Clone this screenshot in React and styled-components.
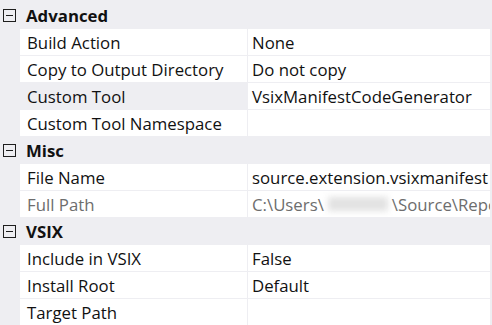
import React from 'react'
import styled, { createGlobalStyle } from 'styled-components'

const GlobalStyle = createGlobalStyle`
	html, body {
		margin: 0;
		padding: 0;
		background: #eeeef2;
	}
`

const Grid = styled.div`
	width: 492px;
	height: 325px;
	overflow: hidden;
	background: #eeeef2;
	font-family: "Open Sans", "Noto Sans", sans-serif;
	font-size: 16.8px;
	color: #111111;
	display: flex;
	flex-direction: column;
`

const Category = styled.div`
	display: flex;
	flex-direction: column;
`

const Header = styled.div`
	height: ${p => p.h}px;
	display: flex;
	align-items: center;
	gap: 10px;
	padding-left: 3px;
	padding-top: 1px;
	box-sizing: border-box;
	font-weight: bold;
`

const Toggle = styled.span`
	width: 11px;
	height: 11px;
	border: 1px solid #1e1e1e;
	position: relative;
	flex: none;

	&::after {
		content: '';
		position: absolute;
		left: 2px;
		right: 2px;
		top: 5px;
		height: 1px;
		background: #1e1e1e;
	}
`

const Row = styled.div`
	display: grid;
	grid-template-columns: 227px 1px 242px;
	margin-left: 20px;
	height: 26px;
	border-bottom: 1px solid #eeeef2;
	&:last-child {
		border-bottom: none;
	}
`

const Name = styled.div`
	background: ${p => (p.selected ? '#eeeef2' : '#ffffff')};
	color: ${p => (p.readOnly ? '#6d6d6d' : '#111111')};
	padding-left: 7px;
	display: flex;
	align-items: center;
	white-space: nowrap;
	overflow: hidden;
`

const Divider = styled.div`
	background: #eeeef2;
`

const Value = styled(Name)`
	background: #ffffff;
	padding-left: 4px;
`

const Blur = styled.span`
	display: inline-block;
	flex: none;
	width: 60px;
	height: 14px;
	margin: 0 4px;
	background: #e2e2e2;
	filter: blur(3px);
`

const categories = [
	{
		title: 'Advanced',
		h: 29,
		rows: [
			{ name: 'Build Action', value: 'None' },
			{ name: 'Copy to Output Directory', value: 'Do not copy' },
			{ name: 'Custom Tool', value: 'VsixManifestCodeGenerator', selected: true },
			{ name: 'Custom Tool Namespace', value: '' },
		],
	},
	{
		title: 'Misc',
		h: 28,
		rows: [
			{ name: 'File Name', value: 'source.extension.vsixmanifest' },
			{
				name: 'Full Path',
				value: (
					<>
						C:\Users\<Blur />\Source\Repos\
					</>
				),
				readOnly: true,
			},
		],
	},
	{
		title: 'VSIX',
		h: 28,
		rows: [
			{ name: 'Include in VSIX', value: 'False' },
			{ name: 'Install Root', value: 'Default' },
			{ name: 'Target Path', value: '' },
		],
	},
]

export default function App() {
	return (
		<>
			<GlobalStyle />
			<Grid>
				{categories.map(cat => (
					<Category key={cat.title}>
						<Header h={cat.h}>
							<Toggle />
							{cat.title}
						</Header>
						{cat.rows.map(r => (
							<Row key={r.name}>
								<Name selected={r.selected} readOnly={r.readOnly}>{r.name}</Name>
								<Divider />
								<Value readOnly={r.readOnly}>{r.value}</Value>
							</Row>
						))}
					</Category>
				))}
			</Grid>
		</>
	)
}
